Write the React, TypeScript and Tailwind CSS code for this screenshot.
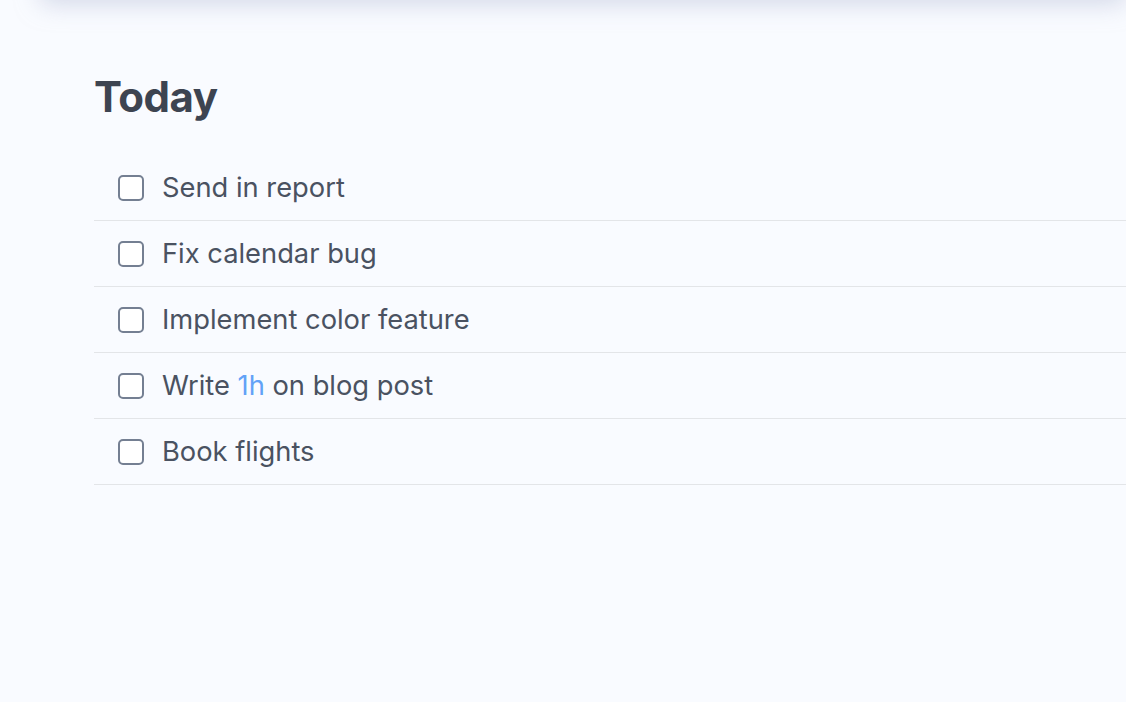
import React, { useState } from 'react'

interface Task {
  id: number
  label: React.ReactNode
}

const tasks: Task[] = [
  { id: 1, label: 'Send in report' },
  { id: 2, label: 'Fix calendar bug' },
  { id: 3, label: 'Implement color feature' },
  {
    id: 4,
    label: (
      <>
        Write <span className="text-[#62a2f7]">1h</span> on blog post
      </>
    ),
  },
  { id: 5, label: 'Book flights' },
]

export default function App() {
  const [done, setDone] = useState<number[]>([])

  const toggle = (id: number) => {
    setDone((prev) => (prev.includes(id) ? prev.filter((d) => d !== id) : [...prev, id]))
  }

  return (
    <div
      className="min-h-[702px] w-full overflow-hidden bg-[#f9fbff]"
      style={{ fontFamily: 'Inter, "Noto Sans", sans-serif' }}
    >
      {/* header bar sits just above the viewport, only its shadow shows */}
      <div className="-mt-20 ml-[40px] h-20 rounded-lg bg-white shadow-[0_4px_24px_rgba(180,188,214,0.55)]" />

      <div className="pl-[94px] pt-[73px]">
        <h1 className="text-[42px] leading-[48px] font-bold tracking-[-0.5px] text-[#3d4451]">Today</h1>

        <ul className="mt-[34px]">
          {tasks.map((task) => (
            <li
              key={task.id}
              className="flex h-[66px] items-center gap-[18px] border-b border-[#e3e5e8] pl-[24px]"
            >
              <button
                onClick={() => toggle(task.id)}
                className={`h-[26px] w-[26px] rounded-[5px] border-2 border-[#747f92] ${
                  done.includes(task.id) ? 'bg-[#747f92]' : 'bg-white'
                }`}
              />
              <span className="text-[27.3px] leading-none text-[#4a5261]">{task.label}</span>
            </li>
          ))}
        </ul>
      </div>
    </div>
  )
}
